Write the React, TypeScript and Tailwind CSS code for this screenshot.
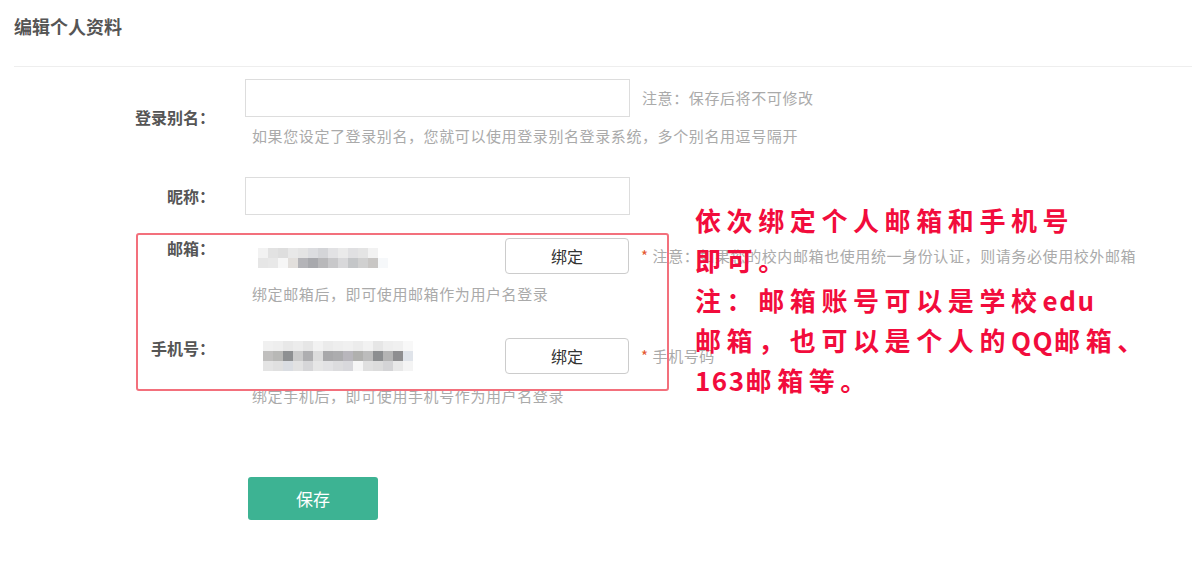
import React from "react";

const emailMosaic = [
  ["#f2f2f2", "#e2e2e2", "#dedede", "#e8e8e8", "#e4e4e4", "#dcdde0", "#d4d5d8", "#e2e2e4", "#eaeaea", "#e0e0e2", "#e4e4e4", "#f2f2f2", "#ffffff"],
  ["#e6e6e6", "#e8e8e8", "#f6f6f6", "#e2dfdc", "#b4b4b8", "#a8a9ad", "#b8b8ba", "#c8c8ca", "#d8d8da", "#c4c6c8", "#d0d0d0", "#c8c6c4", "#f6f8fa"],
];

const phoneMosaic = [
  ["#f0f0f0", "#eeeeee", "#e8e8e8", "#ececec", "#e6e6e6", "#f2f2f2", "#ebebeb", "#eeeeee", "#f0f0f0", "#ececec", "#f2f2f2", "#e6e6e6", "#eeeeee", "#f0f0f0", "#f8f8f8"],
  ["#c0bfbe", "#b8b8b6", "#8e9092", "#cbcbcb", "#aeaeb0", "#dcdcdc", "#a8a8aa", "#acacae", "#b8b6bc", "#b0b0ae", "#bcbcbc", "#8c8e90", "#b4b4b4", "#8e8e90", "#e0e4ea"],
  ["#e4e4e4", "#e0e0e0", "#dadde2", "#e2e2e2", "#d6d6d8", "#e6e6e6", "#e2e2e4", "#dcdcde", "#d8d8dc", "#f6f6f6", "#e0e0e0", "#dcdcdc", "#d4d4d6", "#e8e8e8", "#f4f4f4"],
];

// blurred (pixelated) personal data
const Mosaic = ({ cells }: { cells: string[][] }) => (
  <div className="flex flex-col">
    {cells.map((row, i) => (
      <div key={i} className="flex">
        {row.map((c, j) => (
          <div key={j} className="w-[10px] h-[10px]" style={{ backgroundColor: c }} />
        ))}
      </div>
    ))}
  </div>
);

const Label = ({ children }: { children: React.ReactNode }) => (
  <div className="w-[215px] shrink-0 text-right text-[16px] leading-[24px] font-bold text-[#555]">
    {children}
  </div>
);

const BindButton = () => (
  <button className="w-[124px] h-[36px] shrink-0 rounded-[4px] border border-[#ccc] bg-white text-[16px] text-[#333]">
    绑定
  </button>
);

const Latin = ({ children }: { children: React.ReactNode }) => (
  <span className="tracking-[1.5px]">{children}</span>
);

export default function App() {
  return (
    <div
      className="relative w-[1192px] h-[580px] bg-white overflow-hidden"
      style={{ fontFamily: '"Noto Sans CJK SC", "Noto Sans", sans-serif' }}
    >
      {/* Header */}
      <div className="ml-[14px] h-[67px] border-b border-[#eee] pt-[14px]">
        <h2 className="text-[18px] leading-[24px] font-bold text-[#555]">编辑个人资料</h2>
      </div>

      {/* Alias */}
      <div className="flex gap-[30px] mt-[12px]">
        <div className="pt-[26px]">
          <Label>登录别名：</Label>
        </div>
        <div className="flex flex-col">
          <div className="flex items-center">
            <input className="w-[385px] h-[38px] border border-[#ddd] outline-none px-2" />
            <span className="ml-[12px] text-[15px] tracking-[0.6px] text-[#aaa]">注意：保存后将不可修改</span>
          </div>
          <p className="mt-[9px] ml-[7px] text-[15px] tracking-[0.6px] leading-[20px] text-[#aaa]">
            如果您设定了登录别名，您就可以使用登录别名登录系统，多个别名用逗号隔开
          </p>
        </div>
      </div>

      {/* Nickname */}
      <div className="flex items-center gap-[30px] mt-[31px]">
        <Label>昵称：</Label>
        <input className="w-[385px] h-[38px] border border-[#ddd] outline-none px-2" />
      </div>

      {/* Email */}
      <div className="flex gap-[30px] mt-[21px]">
        <Label>邮箱：</Label>
        <div className="flex flex-col">
          <div className="flex items-center h-[40px]">
            <div className="w-[260px] pl-[13px]">
              <div className="mt-[4px]">
                <Mosaic cells={emailMosaic} />
              </div>
            </div>
            <BindButton />
            <span className="ml-[12px] text-[15px] tracking-[0.6px] text-[#aaa] whitespace-nowrap">
              <span className="text-[#e4572e]">*</span> 注意：如果您的校内邮箱也使用统一身份认证，则请务必使用校外邮箱
            </span>
          </div>
          <p className="mt-[8px] ml-[7px] text-[15px] tracking-[0.6px] leading-[20px] text-[#aaa]">
            绑定邮箱后，即可使用邮箱作为用户名登录
          </p>
        </div>
      </div>

      {/* Phone */}
      <div className="flex gap-[30px] mt-[32px]">
        <Label>手机号：</Label>
        <div className="flex flex-col">
          <div className="flex items-center h-[40px]">
            <div className="w-[260px] pl-[18px]">
              <Mosaic cells={phoneMosaic} />
            </div>
            <BindButton />
            <span className="ml-[12px] text-[15px] tracking-[0.6px] text-[#aaa] whitespace-nowrap">
              <span className="text-[#e4572e]">*</span> 手机号码
            </span>
          </div>
          <p className="mt-[10px] ml-[7px] text-[15px] tracking-[0.6px] leading-[20px] text-[#aaa]">
            绑定手机后，即可使用手机号作为用户名登录
          </p>
        </div>
      </div>

      {/* Save */}
      <button className="ml-[248px] mt-[71px] w-[130px] h-[43px] rounded-[3px] bg-[#3db393] text-white text-[17px]">
        保存
      </button>

      {/* Annotation overlay */}
      <div className="absolute left-[136px] top-[233px] w-[533px] h-[158px] border-2 border-[#f3707c] rounded-[3px] pointer-events-none" />
      <div className="absolute left-[695px] top-[200px] text-[26px] leading-[40px] font-bold tracking-[5.6px] text-[#f20c3c]">
        <p>依次绑定个人邮箱和手机号</p>
        <p>即可。</p>
        <p>
          注：邮箱账号可以是学校<Latin>edu</Latin>
        </p>
        <p>
          邮箱，也可以是个人的<Latin>QQ</Latin>邮箱、
        </p>
        <p>
          <Latin>163</Latin>邮箱等。
        </p>
      </div>
    </div>
  );
}
